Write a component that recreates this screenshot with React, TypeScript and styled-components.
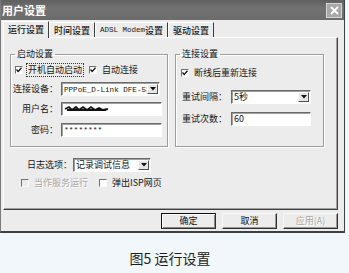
import React from 'react';
import styled, { createGlobalStyle } from 'styled-components';

const Global = createGlobalStyle`
  html, body { margin: 0; padding: 0; background: #f2f7fb; }
  body {
    width: 349px; height: 273px; overflow: hidden;
    font-family: "Noto Sans CJK SC", "Noto Sans", sans-serif;
    color: #151515;
  }
`;

const Page = styled.div`
  width: 349px;
  height: 273px;
  display: flex;
  flex-direction: column;
`;

const Window = styled.div`
  width: 345px;
  height: 233px;
  box-sizing: border-box;
  background: #ececec;
  border-left: 1px solid #7a7a7a;
  border-right: 1px solid #404040;
  border-bottom: 2px solid #404040;
  display: flex;
  flex-direction: column;
`;

const TitleBar = styled.div`
  height: 20px;
  flex: none;
  background: linear-gradient(#5f5f5f, #727272 40%, #6c6c6c);
  display: flex;
  align-items: center;
  justify-content: space-between;
  padding: 0 2px 0 1px;
`;

const Title = styled.span`
  color: #fff;
  font-weight: 700;
  font-size: 11px;
  line-height: 14px;
`;

const CloseBtn = styled.div`
  width: 14px;
  height: 13px;
  border: 1px solid #d6d6d6;
  background: #a8a8a8;
  display: flex;
  align-items: center;
  justify-content: center;
`;

const TabStrip = styled.div`
  height: 17px;
  flex: none;
  display: flex;
  align-items: flex-end;
  padding-left: 2px;
  position: relative;
  z-index: 1;
`;

const Tab = styled.div<{ $active?: boolean }>`
  height: ${p => (p.$active ? 17 : 15)}px;
  margin-bottom: ${p => (p.$active ? -1 : 0)}px;
  box-sizing: border-box;
  padding: 0 4px;
  border-top: 1px solid #fff;
  border-left: 1px solid #fff;
  border-right: 1px solid #3c3c3c;
  background: #ececec;
  font-size: 9px;
  line-height: ${p => (p.$active ? 14 : 13)}px;
  font-weight: 500;
  white-space: nowrap;
  display: flex;
  align-items: center;
`;

const Latin = styled.span<{ $size?: number }>`
  font-family: "Liberation Mono", monospace;
  font-size: ${p => p.$size ?? 7.5}px;
`;

const Panel = styled.div`
  margin-left: 2px;
  width: 335px;
  height: 173px;
  flex: none;
  box-sizing: border-box;
  border-top: 1px solid #fff;
  border-left: 1px solid #fff;
  border-right: 1px solid #404040;
  border-bottom: 1px solid #404040;
  box-shadow: inset -1px -1px 0 #a0a0a0;
  display: flex;
  flex-direction: column;
`;

const GroupsRow = styled.div`
  display: flex;
  gap: 7px;
  margin-top: 10px;
  padding-left: 6px;
`;

const Group = styled.fieldset<{ $w: number }>`
  width: ${p => p.$w}px;
  height: 99px;
  box-sizing: border-box;
  margin: 0;
  padding: 0;
  min-width: 0;
  border: 1px solid #9c9c9c;
  box-shadow: 1px 1px 0 #fff, inset 1px 1px 0 #fff;
  display: flex;
  flex-direction: column;
`;

const Legend = styled.legend`
  margin-left: 4px;
  padding: 0 2px;
  font-size: 9px;
  line-height: 12px;
`;

const Row = styled.div<{ $mt: number; $pl?: number }>`
  display: flex;
  align-items: center;
  margin-top: ${p => p.$mt}px;
  padding-left: ${p => p.$pl ?? 0}px;
  font-size: 9px;
  line-height: 12px;
  white-space: nowrap;
`;

const Label = styled.span<{ $w?: number; $gap?: number }>`
  width: ${p => (p.$w ? `${p.$w}px` : 'auto')};
  text-align: right;
  margin-right: ${p => p.$gap ?? 3}px;
  flex: none;
`;

const CheckText = styled.span<{ $disabled?: boolean; $focus?: boolean; $gap?: number }>`
  margin-left: 4px;
  margin-right: ${p => p.$gap ?? 0}px;
  padding: 0 1px;
  outline: ${p => (p.$focus ? '1px dotted #333' : 'none')};
  color: ${p => (p.$disabled ? '#a6a6a6' : 'inherit')};
  text-shadow: ${p => (p.$disabled ? '1px 1px 0 #fff' : 'none')};
`;

const Box = styled.span<{ $disabled?: boolean }>`
  width: 8px;
  height: 8px;
  flex: none;
  box-sizing: border-box;
  border-top: 1px solid #707070;
  border-left: 1px solid #707070;
  border-right: 1px solid #fafafa;
  border-bottom: 1px solid #fafafa;
  background: ${p => (p.$disabled ? '#ececec' : '#fff')};
  display: flex;
  align-items: center;
  justify-content: center;
`;

const Field = styled.div<{ $w: number }>`
  width: ${p => p.$w}px;
  height: 14px;
  box-sizing: border-box;
  border-top: 1px solid #6a6a6a;
  border-left: 1px solid #6a6a6a;
  border-right: 1px solid #fff;
  border-bottom: 1px solid #fff;
  box-shadow: inset 1px 1px 0 #a0a0a0;
  background: #fff;
  display: flex;
  align-items: center;
  padding-left: 2px;
  overflow: hidden;
  flex: none;
`;

const FieldText = styled.span`
  flex: 1;
  overflow: hidden;
  white-space: nowrap;
`;

const Arrow = styled.span`
  width: 11px;
  height: 10px;
  flex: none;
  margin-right: 1px;
  box-sizing: border-box;
  border-top: 1px solid #fff;
  border-left: 1px solid #fff;
  border-right: 1px solid #505050;
  border-bottom: 1px solid #505050;
  background: #e6e6e6;
  display: flex;
  align-items: center;
  justify-content: center;
`;

const ButtonRow = styled.div`
  display: flex;
  justify-content: flex-end;
  gap: 6px;
  margin-top: 3px;
  padding-right: 6px;
`;

const Button = styled.div<{ $default?: boolean; $disabled?: boolean }>`
  width: 55px;
  height: 16px;
  box-sizing: border-box;
  border: 1px solid ${p => (p.$default ? '#101010' : '#f8f8f8')};
  border-right-color: #303030;
  border-bottom-color: #303030;
  box-shadow: ${p => (p.$default ? 'inset 1px 1px 0 #fff, inset -1px -1px 0 #888' : 'inset -1px -1px 0 #999')};
  background: #ececec;
  display: flex;
  align-items: center;
  justify-content: center;
  font-size: 9px;
  line-height: 12px;
  color: ${p => (p.$disabled ? '#a8a8a8' : '#111')};
  text-shadow: ${p => (p.$disabled ? '1px 1px 0 #fff' : 'none')};
`;

const Caption = styled.div`
  margin-top: 17px;
  padding-right: 9px;
  text-align: center;
  font-size: 14px;
  line-height: 16px;
  color: #1e1e1e;
`;

const Check = () => (
  <svg width="6" height="6" viewBox="0 0 6 6">
    <path d="M0.5 2.5 L2.2 4.5 L5.5 0.8" stroke="#111" strokeWidth="1.3" fill="none" />
  </svg>
);

const Down = () => (
  <svg width="6" height="4" viewBox="0 0 6 4">
    <path d="M0 0 H6 L3 3.5 Z" fill="#111" />
  </svg>
);

const Scribble = () => (
  <svg width="46" height="8" viewBox="0 0 46 8">
    <path
      d="M1 4 L5 2 L8 5 L12 2 L15 5 L19 2 L23 5 L27 2 L31 5 L35 3 L39 5 L44 4 M3 5 L42 5"
      stroke="#111"
      strokeWidth="1.8"
      fill="none"
    />
  </svg>
);

export default function App() {
  return (
    <Page>
      <Global />
      <Window>
        <TitleBar>
          <Title>用户设置</Title>
          <CloseBtn>
            <svg width="9" height="9" viewBox="0 0 9 9">
              <path d="M1 1 L8 8 M8 1 L1 8" stroke="#fff" strokeWidth="1.8" />
            </svg>
          </CloseBtn>
        </TitleBar>
        <TabStrip>
          <Tab $active>运行设置</Tab>
          <Tab>时间设置</Tab>
          <Tab>
            <Latin $size={7.5}>ADSL Modem</Latin>设置
          </Tab>
          <Tab>驱动设置</Tab>
        </TabStrip>
        <Panel>
          <GroupsRow>
            <Group $w={158}>
              <Legend>启动设置</Legend>
              <Row $mt={4} $pl={4}>
                <Box>
                  <Check />
                </Box>
                <CheckText $focus $gap={6}>开机自动启动</CheckText>
                <Box>
                  <Check />
                </Box>
                <CheckText>自动连接</CheckText>
              </Row>
              <Row $mt={6}>
                <Label $w={47}>连接设备：</Label>
                <Field $w={99}>
                  <FieldText>
                    <Latin $size={7.6}>PPPoE_D-Link DFE-53</Latin>
                  </FieldText>
                  <Arrow>
                    <Down />
                  </Arrow>
                </Field>
              </Row>
              <Row $mt={6}>
                <Label $w={47}>用户名：</Label>
                <Field $w={101}>
                  <Scribble />
                </Field>
              </Row>
              <Row $mt={7}>
                <Label $w={47}>密码：</Label>
                <Field $w={101}>
                  <Latin $size={8}>********</Latin>
                </Field>
              </Row>
            </Group>
            <Group $w={149}>
              <Legend>连接设置</Legend>
              <Row $mt={7} $pl={5}>
                <Box>
                  <Check />
                </Box>
                <CheckText>断线后重新连接</CheckText>
              </Row>
              <Row $mt={11} $pl={6}>
                <Label $gap={4}>重试间隔：</Label>
                <Field $w={80}>
                  <FieldText>5秒</FieldText>
                  <Arrow>
                    <Down />
                  </Arrow>
                </Field>
              </Row>
              <Row $mt={8} $pl={6}>
                <Label $gap={4}>重试次数：</Label>
                <Field $w={80}>
                  <FieldText>60</FieldText>
                </Field>
              </Row>
            </Group>
          </GroupsRow>
          <Row $mt={11} $pl={23}>
            <Label $gap={1}>日志选项：</Label>
            <Field $w={78}>
              <FieldText>记录调试信息</FieldText>
              <Arrow>
                <Down />
              </Arrow>
            </Field>
          </Row>
          <Row $mt={5} $pl={17}>
            <Box $disabled />
            <CheckText $disabled $gap={10}>当作服务运行</CheckText>
            <Box />
            <CheckText>弹出ISP网页</CheckText>
          </Row>
        </Panel>
        <ButtonRow>
          <Button $default>确定</Button>
          <Button>取消</Button>
          <Button $disabled>应用(A)</Button>
        </ButtonRow>
      </Window>
      <Caption>图5 运行设置</Caption>
    </Page>
  );
}
